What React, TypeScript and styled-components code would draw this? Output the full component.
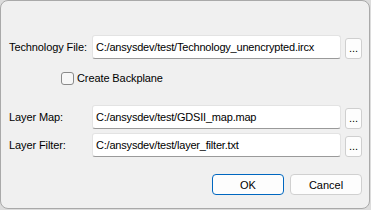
import React from "react";
import styled, { createGlobalStyle } from "styled-components";

const Global = createGlobalStyle`
  html, body { margin: 0; padding: 0; background: #dcdcdc; }
  body { font-family: "Liberation Sans", Arial, sans-serif; font-size: 11px; letter-spacing: -0.1px; color: #000; }
`;

const Dialog = styled.div`
  box-sizing: border-box;
  width: 370px;
  height: 209px;
  background: #f0f0f0;
  border: 1px solid #a9a9a9;
  border-radius: 8px;
  padding: 34px 7px 0 8px;
  display: flex;
  flex-direction: column;
`;

const Row = styled.div`
  display: flex;
  align-items: center;
  height: 24px;
`;

const Label = styled.span`
  width: 83px;
  flex: none;
  white-space: nowrap;
`;

const Field = styled.div`
  flex: 1;
  box-sizing: border-box;
  height: 24px;
  background: #fff;
  border: 1px solid #e3e3e3;
  border-bottom-color: #9a9a9a;
  border-radius: 3px;
  padding: 0 3px;
  display: flex;
  align-items: center;
  white-space: nowrap;
  overflow: hidden;
  letter-spacing: -0.2px;
`;

const Browse = styled.button`
  flex: none;
  box-sizing: border-box;
  width: 17px;
  height: 21px;
  margin-left: 4px;
  margin-top: 2px;
  padding: 0 0 4px;
  background: #fdfdfd;
  border: 1px solid #cfcfcf;
  border-radius: 3px;
  font: inherit;
  display: flex;
  align-items: flex-end;
  justify-content: center;
`;

const CheckRow = styled.label`
  display: flex;
  align-items: center;
  margin: 12px 0 0 52px;
  height: 14px;
`;

const Box = styled.span`
  box-sizing: border-box;
  width: 13px;
  height: 13px;
  border: 1px solid #8a8a8a;
  border-radius: 3px;
  background: #f7f7f7;
  margin-right: 3px;
`;

const Spacer = styled.div<{ $h: number }>`
  height: ${(p) => p.$h}px;
  flex: none;
`;

const Footer = styled.div`
  display: flex;
  justify-content: flex-end;
  gap: 6px;
`;

const Btn = styled.button<{ $primary?: boolean }>`
  box-sizing: border-box;
  width: 72px;
  height: 21px;
  background: #fdfdfd;
  border: 1px solid ${(p) => (p.$primary ? "#0067c0" : "#d0d0d0")};
  border-radius: 4px;
  font: inherit;
  color: #000;
  padding: 0;
`;

export default function App() {
  return (
    <>
      <Global />
      <Dialog>
        <Row>
          <Label>Technology File:</Label>
          <Field>C:/ansysdev/test/Technology_unencrypted.ircx</Field>
          <Browse>...</Browse>
        </Row>
        <CheckRow>
          <Box />
          Create Backplane
        </CheckRow>
        <Spacer $h={20} />
        <Row>
          <Label>Layer Map:</Label>
          <Field>C:/ansysdev/test/GDSII_map.map</Field>
          <Browse>...</Browse>
        </Row>
        <Spacer $h={4} />
        <Row>
          <Label>Layer Filter:</Label>
          <Field>C:/ansysdev/test/layer_filter.txt</Field>
          <Browse>...</Browse>
        </Row>
        <Spacer $h={17} />
        <Footer>
          <Btn $primary>OK</Btn>
          <Btn>Cancel</Btn>
        </Footer>
      </Dialog>
    </>
  );
}
